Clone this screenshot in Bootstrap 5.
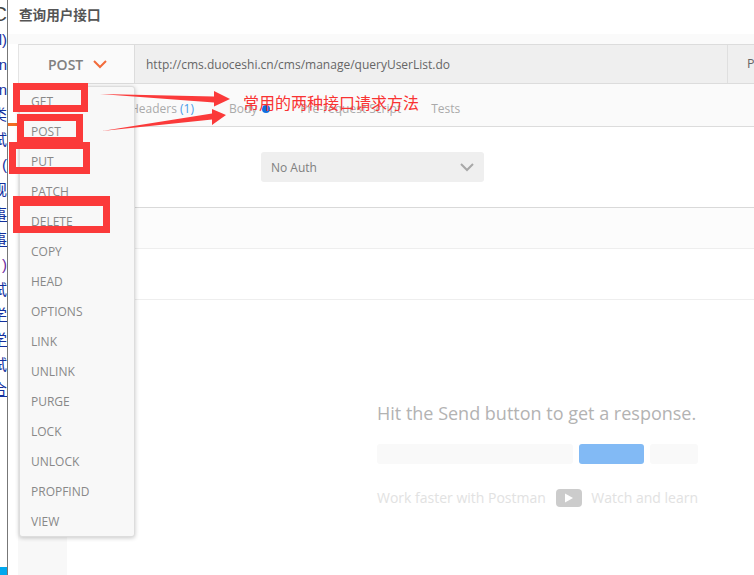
<!DOCTYPE html>
<html lang="zh">
<head>
<meta charset="utf-8">
<title>查询用户接口</title>
<link rel="stylesheet" href="https://cdn.jsdelivr.net/npm/bootstrap@5.3.0/dist/css/bootstrap.min.css">
<style>
html,body{height:575px;overflow:hidden}
body{font-family:"Open Sans","Noto Sans CJK SC",sans-serif;font-size:12px;color:#808080;background:#fff;position:relative}
.page-strip{width:7px;height:575px;overflow:hidden;flex:none;font-family:"Liberation Sans","Noto Sans CJK SC",sans-serif;font-size:15px;line-height:25px;color:#12309e;padding-top:2px}
.page-strip span{display:flex;justify-content:flex-end;height:25px;white-space:nowrap}
.page-strip .ul{text-decoration:underline}
.page-strip .circ{color:#444;font-size:20px}
.page-strip .pur{color:#6a2aa0}
.strip-end{width:7px;height:8px;background:#00a8ee;margin-top:auto;flex:none}
.divider-line{width:1px;flex:none;background:#777}
.app-shell{min-width:0}
.gutter-mark{width:10px;height:3px;background:#f26b22;margin-top:79px}
.gutter-col{width:10px;flex:none}
.title-row{height:34px;padding-left:11px;font-size:13.6px;font-weight:700;color:#555;line-height:29px;font-family:"Noto Sans CJK SC",sans-serif}
.title-band{height:10px;background:#fafafa}
.main-col{min-width:0}
.req-bar{height:40px;border-top:1px solid #dcdcdc;border-bottom:1px solid #dcdcdc;border-left:1px solid #e4e4e4}
.method-cell{width:116px;background:#fafafa;border-right:1px solid #dcdcdc;font-size:14px;font-weight:600;color:#808080;padding-left:29px;gap:10px}
.url-cell{background:#efefef;color:#666;font-size:12px;padding:1px 0 0 11px;border-right:1px solid #dfdfdf}
.params-cell{width:26px;background:#efefef;color:#666;font-size:12.5px;padding-left:19px;overflow:hidden}
.tab-row{height:43px;background:#fafafa;border-bottom:1px solid #dcdcdc;color:#aaa;padding:8px 0 0 15px;gap:30px}
.tab-auth{width:67px;overflow:hidden;white-space:nowrap}
.tab-count{color:#4a9ae8}
.tab-dot{display:inline-block;width:8px;height:8px;border-radius:50%;background:#0f6fe0;margin-left:5px}
.tab-body{margin-left:5px}
.side-rail{width:49px;background:#f8f8f8;flex:none}
.right-col{min-width:0}
.auth-pane{height:80px;padding:25px 0 0 194px}
.auth-select{width:223px;height:30px;background:#efefef;border-radius:3px;color:#808080;padding:1px 10px 0}
.band-a{height:42px;background:#fcfcfc;border-top:1px solid #d9d9d9;border-bottom:1px solid #eee}
.band-b{height:51px;border-bottom:1px solid #eee}
.resp-pane{padding:100px 0 0 310px}
.resp-head{font-size:18px;color:#b3b3b3;line-height:26px;white-space:nowrap}
.resp-bars{height:20px;margin-top:18px;width:321px;gap:6px}
.bar-a{width:196px;background:#f9f9f9;border-radius:3px}
.bar-b{width:65px;background:#82baf5;border-radius:3px}
.bar-c{width:48px;background:#f9f9f9;border-radius:3px}
.resp-foot{width:321px;margin-top:24px;color:#e2e2e2;font-size:14px;line-height:20px;white-space:nowrap;justify-content:space-between}
.method-menu.dropdown-menu{position:absolute;left:19px;top:86px;width:116px;min-width:0;height:451px;padding:0;margin:0;background:#f8f8f8;border:1px solid #ddd;border-radius:3px;box-shadow:0 1px 4px rgba(0,0,0,.22);font-size:12px;z-index:5}
.method-menu .dropdown-item{height:30px;line-height:30px;padding:0 0 0 11px;color:#888;background:transparent}
.red-box{position:absolute;border:7px solid #fb3a3a;z-index:6}
.box-get{left:13px;top:83px;width:75px;height:29px}
.box-post{left:17px;top:114px;width:66px;height:30px}
.box-put{left:9px;top:142px;width:81px;height:32px}
.box-del{left:13px;top:196px;width:97px;height:37px;border-top-width:10px}
.arrow-layer{position:absolute;left:0;top:0;z-index:7;pointer-events:none}
.anno-text{position:absolute;left:243px;top:91px;font-family:"Noto Sans CJK SC",sans-serif;font-size:16px;line-height:22px;color:#f93333;z-index:7;white-space:nowrap}
</style>
</head>
<body class="d-flex">
<div class="page-strip d-flex flex-column">
<span class="circ">C</span><span>l)</span><span>n</span><span>n</span><span>类</span><span>试</span><span>(</span><span>规</span><span class="ul">事</span><span class="ul">事</span><span class="pur">)</span><span>试</span><span class="ul">学</span><span class="ul">学</span><span>试</span><span class="ul">合</span>
<div class="strip-end"></div>
</div>
<div class="divider-line"></div>
<div class="app-shell flex-grow-1 d-flex flex-column">
  <div class="title-row">查询用户接口</div>
  <div class="title-band"></div>
  <div class="d-flex flex-grow-1">
    <div class="gutter-col"><div class="gutter-mark"></div></div>
    <div class="main-col flex-grow-1 d-flex flex-column">
      <div class="req-bar d-flex">
        <div class="method-cell d-flex align-items-center">POST
          <svg width="14" height="9" viewBox="0 0 14 9" fill="none" stroke="#f26b3a" stroke-width="2"><path d="M1 1l6 6 6-6"/></svg>
        </div>
        <div class="url-cell flex-grow-1 d-flex align-items-center">http://cms.duoceshi.cn/cms/manage/queryUserList.do</div>
        <div class="params-cell d-flex align-items-center">P</div>
      </div>
      <div class="tab-row d-flex align-items-center">
        <div class="tab-auth">Authorization</div>
        <div>Headers <span class="tab-count">(1)</span></div>
        <div class="tab-body d-flex align-items-center">Body<span class="tab-dot"></span></div>
        <div>Pre-request Script</div>
        <div>Tests</div>
      </div>
      <div class="d-flex flex-grow-1">
        <div class="side-rail"></div>
        <div class="right-col flex-grow-1">
          <div class="auth-pane">
            <div class="auth-select d-flex align-items-center justify-content-between">No Auth
              <svg width="14" height="9" viewBox="0 0 14 9" fill="none" stroke="#a8a8a8" stroke-width="2"><path d="M1 1l6 6 6-6"/></svg>
            </div>
          </div>
          <div class="band-a"></div>
          <div class="band-b"></div>
          <div class="resp-pane">
            <div class="resp-head">Hit the Send button to get a response.</div>
            <div class="resp-bars d-flex"><div class="bar-a"></div><div class="bar-b"></div><div class="bar-c"></div></div>
            <div class="resp-foot d-flex align-items-center"><span>Work faster with Postman</span>
              <svg width="26" height="18" viewBox="0 0 26 18"><rect width="26" height="18" rx="4" fill="#ccc"/><path d="M9 4.500v9l8-4.500z" fill="#fff"/></svg>
              <span>Watch and learn</span></div>
          </div>
        </div>
      </div>
    </div>
  </div>
</div>
<ul class="dropdown-menu show method-menu list-unstyled">
<li class="dropdown-item">GET</li><li class="dropdown-item">POST</li><li class="dropdown-item">PUT</li><li class="dropdown-item">PATCH</li><li class="dropdown-item">DELETE</li><li class="dropdown-item">COPY</li><li class="dropdown-item">HEAD</li><li class="dropdown-item">OPTIONS</li><li class="dropdown-item">LINK</li><li class="dropdown-item">UNLINK</li><li class="dropdown-item">PURGE</li><li class="dropdown-item">LOCK</li><li class="dropdown-item">UNLOCK</li><li class="dropdown-item">PROPFIND</li><li class="dropdown-item">VIEW</li>
</ul>
<div class="red-box box-get"></div><div class="red-box box-post"></div><div class="red-box box-put"></div><div class="red-box box-del"></div>
<svg class="arrow-layer" width="754" height="575" viewBox="0 0 754 575"><path d="M100 94L214 96.500V91L230 99L214 106.500V102.500z" fill="#fb3a3a"/><path d="M102 131L212 113.500V109L226 115L212 125V119.500z" fill="#fb3a3a"/></svg>
<div class="anno-text">常用的两种接口请求方法</div>
</body>
</html>
